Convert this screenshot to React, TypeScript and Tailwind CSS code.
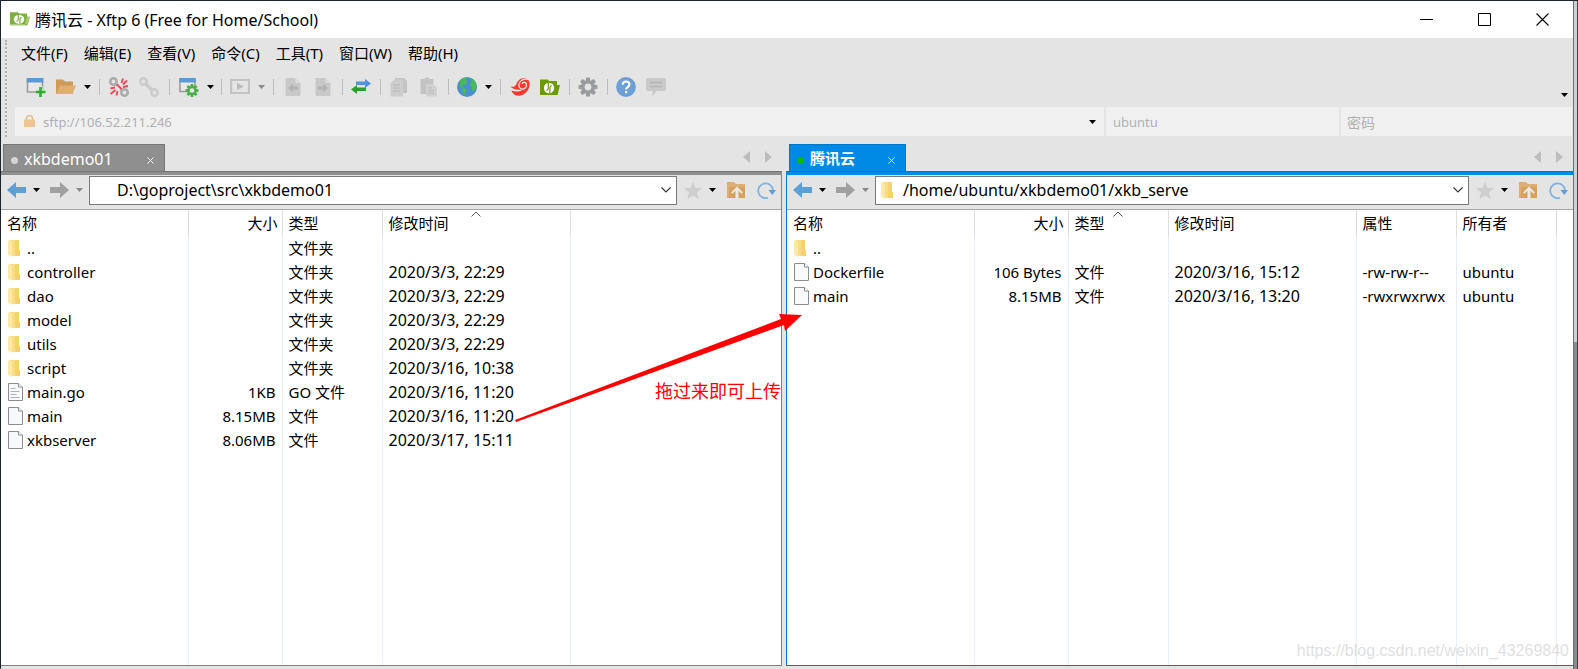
import type { ReactNode } from "react";

const Caret = ({ dim = false }: { dim?: boolean }) => (
  <svg viewBox="0 0 7 4" className={`h-1 w-[7px] ${dim ? "fill-[#8a8a8a]" : "fill-black"}`} aria-hidden="true">
    <path d="M0 0h7L3.5 4z" />
  </svg>
);

function Tool({ label, children }: { label: string; children: ReactNode }) {
  return (
    <button type="button" aria-label={label} className="flex h-8 w-[30px] shrink-0 items-center justify-center">
      <svg viewBox="0 0 20 20" className="size-5" aria-hidden="true">
        {children}
      </svg>
    </button>
  );
}

function DropButton({ label, dim }: { label: string; dim?: boolean }) {
  return (
    <button type="button" aria-label={label} className="flex h-8 w-[13px] shrink-0 items-center justify-center">
      <Caret dim={dim} />
    </button>
  );
}

const Separator = ({ wide = false }: { wide?: boolean }) => (
  <span className={`flex shrink-0 justify-center ${wide ? "w-2.5" : "w-2"}`}>
    <span className="h-4 w-px bg-[#bdbdbd]" />
  </span>
);

const gearTeeth = [0, 45, 90, 135, 180, 225, 270, 315];

function Gear({ cx, cy, r, color, hole }: { cx: number; cy: number; r: number; color: string; hole: string }) {
  return (
    <g transform={`translate(${cx} ${cy}) scale(${r / 10})`}>
      {gearTeeth.map((a) => (
        <path key={a} d="M-1.800 -10h3.600l1 5h-5.600z" fill={color} transform={`rotate(${a})`} />
      ))}
      <circle r="7" fill={color} />
      <circle r="3.6" fill={hole} />
    </g>
  );
}

function XftpMark({ light = false }: { light?: boolean }) {
  const green = light ? "#7fae42" : "#6a9a06";
  return (
    <g>
      <path d="M0 2.500h8l1 1.500h8V8h3l-2.500 10H0z" fill={green} />
      {light && <path d="M17 8h3l-2.500 8.500H15V18H0v-1.500h15z" fill="#a9c878" />}
      <circle cx="9" cy="11" r="5.200" fill="#fff" />
      <path d="M8.300 6v5.200q0 1.300-1.800 2.300M9.900 16v-5.200q0-1.300 1.800-2.300" stroke={green} strokeWidth="1.200" fill="none" />
    </g>
  );
}

function Toolbar() {
  return (
    <div className="flex h-[39px] items-center pb-0.5 pl-3.5" role="toolbar" aria-label="工具栏">
      <Tool label="新建">
        <path d="M1.500 2.500h15v12.500h-15z" fill="#e9e9e9" stroke="#9b9b9b" strokeWidth="1.600" />
        <path d="M.7 1h16.600v4.500H.7z" fill="#5b9bd5" />
        <path d="M14.500 9v11M9 14.500h11" stroke="#e4e4e4" strokeWidth="4" />
        <path d="M14.500 10v10M9.500 15h10" stroke="#2eae2e" strokeWidth="2.600" />
      </Tool>
      <Tool label="打开">
        <path d="M0 2.500h7l2 2h8V17H0z" fill="#cf9a58" />
        <path d="M4 8.500h16L16.500 17H0z" fill="#deae72" />
      </Tool>
      <DropButton label="打开选项" />
      <Separator wide />
      <Tool label="断开">
        <g fill="none" stroke="#ababab" strokeWidth="2.600">
          <circle cx="4.500" cy="4.500" r="3.200" />
          <circle cx="15.500" cy="15.500" r="3.200" />
          <path d="M6.500 6.500l2 2M11.500 11.500l2 2" />
        </g>
        <path d="M12.500 6l1.500-4.500M14 7.500l4-4M14 10l5-1M6 10.500l-4.500 1M6.500 13l-5 4M8.500 14l-1 4.500M8 7.500l4.500 4.500" stroke="#ee4757" strokeWidth="1.800" />
      </Tool>
      <Tool label="重新连接">
        <g fill="none" stroke="#cbcbcb" strokeWidth="2.600">
          <circle cx="4.500" cy="4.500" r="3.200" />
          <circle cx="15.500" cy="15.500" r="3.200" />
          <path d="M6.500 6.500l7 7" strokeWidth="3.200" />
        </g>
      </Tool>
      <Separator wide />
      <Tool label="属性">
        <path d="M1 2.500h15v12H1z" fill="#e9e9e9" stroke="#9b9b9b" strokeWidth="1.600" />
        <path d="M.2 1h16.600v4.500H.2z" fill="#5b9bd5" />
        <Gear cx={13} cy={13.5} r={6.5} color="#49b04c" hole="#e9e9e9" />
      </Tool>
      <DropButton label="属性选项" />
      <Separator />
      <Tool label="播放">
        <path d="M1 3h18v13H1z" fill="none" stroke="#c3c3c3" strokeWidth="2.200" />
        <path d="M7 6l7 3.500L7 13z" fill="#bcbcbc" />
      </Tool>
      <DropButton label="播放选项" dim />
      <Separator wide />
      <Tool label="向左传输">
        <path d="M2.500 1h10l5 5v13h-15z" fill="#c8c8c8" />
        <path d="M12.500 1v5h5z" fill="#dcdcdc" />
        <path d="M5 11l5-4.500V9.500h5v3h-5v3z" fill="#b3b3b3" />
      </Tool>
      <Tool label="向右传输">
        <path d="M2.500 1h10l5 5v13h-15z" fill="#c8c8c8" />
        <path d="M12.500 1v5h5z" fill="#dcdcdc" />
        <path d="M15 11l-5-4.500V9.500H5v3h5v3z" fill="#b3b3b3" />
      </Tool>
      <Separator />
      <Tool label="同步">
        <path d="M5 4.500h9V2l6 4.500-6 4.500V8H5z" fill="#4f93d8" />
        <path d="M15 10.500H6V8l-6 4.500L6 17v-3h9z" fill="#2aa02a" />
      </Tool>
      <Separator />
      <Tool label="复制">
        <path d="M6 1h9l3 3v12H6z" fill="#c3c3c3" />
        <path d="M1.500 6l4-3.500h8.500V19.500H1.500z" fill="#cdcdcd" />
        <path d="M4 8h7M4 11h7M4 14h7" stroke="#b8b8b8" strokeWidth="1.200" />
      </Tool>
      <Tool label="粘贴">
        <path d="M1.500 2H6V.5h4V2h4.500v15h-13z" fill="#c3c3c3" />
        <path d="M7 7h7l4 3.500v9H7z" fill="#d0d0d0" />
        <path d="M9 11h4M9 13.500h6M9 16h6" stroke="#b8b8b8" strokeWidth="1.200" />
      </Tool>
      <Separator />
      <Tool label="浏览器">
        <circle cx="10" cy="10" r="10" fill="#4a8fd0" />
        <path d="M3 3.500C6 1 9 0 10.500.8L9 3l1.500 2-2.500 3-3 1 2 2 2.500 1.500-1 3-1 3C6 17 5.500 14 5.500 12.500L3 9zM12 2l3-.8c3 1.800 4.500 4.800 4.700 8l-2.200 5-2.500-.5-.5-4-2-2 1-2.500 2-1z" fill="#49b95d" />
      </Tool>
      <DropButton label="语言" />
      <Separator wide />
      <Tool label="Xshell">
        <path d="M0 9c2 1.500 4 1 6-1 1.500-5 6-8 10.500-6.500C20 3 20.500 8 18.500 12c-3 6-9 8-13.500 6C3 17 2 15 1.500 13.500c4 2 9 1 12-1C8 13 3 13 0 9z" fill="#f23a2f" />
        <path d="M18 2.500c-5-2-11 3-8.500 8 2 3 7 1.500 7-2.500 0-3-4-3.500-4.500-.8" fill="none" stroke="#e4e4e4" strokeWidth="1.300" />
        <circle cx="13" cy="8.500" r="1.500" fill="#f23a2f" />
      </Tool>
      <Tool label="Xftp">
        <XftpMark />
      </Tool>
      <Separator />
      <Tool label="选项">
        <Gear cx={10} cy={10} r={9.5} color="#999b9e" hole="#e4e4e4" />
      </Tool>
      <Separator />
      <Tool label="帮助">
        <circle cx="10" cy="10" r="9.900" fill="#6c9fd6" />
        <path d="M6.700 7.700C6.700 5.500 8 4.500 10 4.500s3.500 1.100 3.500 3c0 2.500-3.400 2.600-3.400 5" fill="none" stroke="#fff" strokeWidth="2.100" />
        <path d="M9 14h2.200v2.200H9z" fill="#fff" />
      </Tool>
      <Tool label="反馈">
        <path d="M2 1h16a2 2 0 0 1 2 2v9a2 2 0 0 1-2 2h-7.500L6.500 19v-5H2a2 2 0 0 1-2-2V3a2 2 0 0 1 2-2z" fill="#c9c9c9" />
        <path d="M4 5.500h12M4 9.500h12" stroke="#b6b6b6" strokeWidth="1.400" />
      </Tool>
      <button type="button" aria-label="更多工具" className="mr-[5px] ml-auto self-end pb-2">
        <Caret />
      </button>
    </div>
  );
}

const FolderIcon = () => (
  <svg viewBox="0 0 13 17" className="h-[17px] w-[13px] shrink-0" aria-hidden="true">
    <path d="M2 0h9v10h1v6H3z" fill="#f9dc84" />
    <path d="M7 0h4v10h1v6H7z" fill="#f4d270" />
    <path d="M0 0l4 2v15l-4-2z" fill="#ffe9a8" />
  </svg>
);

const FileIcon = ({ text = false }: { text?: boolean }) => (
  <svg viewBox="0 0 15 18" className="h-[18px] w-[15px] shrink-0" aria-hidden="true">
    <path d="M.5.5h10L14.500 4v13.500H.5z" fill="#f8f9fa" stroke="#8c8c8c" />
    <path d="M10.500.5V4h4" fill="#fff" stroke="#8c8c8c" />
    {text && <path d="M2.500 5.500h5M2.500 8.500h9M2.500 11.500h6M2.500 14.500h9" stroke="#b0b4b8" />}
  </svg>
);

const Arrow = ({ forward = false }: { forward?: boolean }) => (
  <svg viewBox="0 0 19 16" className={`h-4 w-[19px] ${forward ? "fill-[#a0a0a0]" : "fill-[#5b9fd6]"}`} aria-hidden="true">
    <path d={forward ? "M19 8l-9 8v-5H0V5h10V0z" : "M0 8l9-8v5h10v6H9v5z"} />
  </svg>
);

type Row = { kind: "folder" | "file" | "text"; cells: string[] };

type PaneData = {
  tab: string;
  path: string;
  active: boolean;
  headers: string[];
  sorted: number;
  rows: Row[];
};

const localPane: PaneData = {
  tab: "xkbdemo01",
  path: "D:\\goproject\\src\\xkbdemo01",
  active: false,
  headers: ["名称", "大小", "类型", "修改时间"],
  sorted: 3,
  rows: [
    { kind: "folder", cells: ["..", "", "文件夹", ""] },
    { kind: "folder", cells: ["controller", "", "文件夹", "2020/3/3, 22:29"] },
    { kind: "folder", cells: ["dao", "", "文件夹", "2020/3/3, 22:29"] },
    { kind: "folder", cells: ["model", "", "文件夹", "2020/3/3, 22:29"] },
    { kind: "folder", cells: ["utils", "", "文件夹", "2020/3/3, 22:29"] },
    { kind: "folder", cells: ["script", "", "文件夹", "2020/3/16, 10:38"] },
    { kind: "text", cells: ["main.go", "1KB", "GO 文件", "2020/3/16, 11:20"] },
    { kind: "file", cells: ["main", "8.15MB", "文件", "2020/3/16, 11:20"] },
    { kind: "file", cells: ["xkbserver", "8.06MB", "文件", "2020/3/17, 15:11"] },
  ],
};

const remotePane: PaneData = {
  tab: "腾讯云",
  path: "/home/ubuntu/xkbdemo01/xkb_serve",
  active: true,
  headers: ["名称", "大小", "类型", "修改时间", "属性", "所有者"],
  sorted: 2,
  rows: [
    { kind: "folder", cells: ["..", "", "", "", "", ""] },
    { kind: "file", cells: ["Dockerfile", "106 Bytes", "文件", "2020/3/16, 15:12", "-rw-rw-r--", "ubuntu"] },
    { kind: "file", cells: ["main", "8.15MB", "文件", "2020/3/16, 13:20", "-rwxrwxrwx", "ubuntu"] },
  ],
};

const colWidths = ["w-[187px]", "w-[94px]", "w-[100px]", "w-[188px]", "w-[100px]", "w-[100px]"];

function FileTable({ pane }: { pane: PaneData }) {
  return (
    <table className="h-full w-full grow table-fixed border-collapse bg-white text-left text-[15px] leading-5">
      <colgroup>
        {pane.headers.map((h, i) => (
          <col key={h} className={colWidths[i]} />
        ))}
        <col />
      </colgroup>
      <thead>
        <tr className="h-[26px]">
          {pane.headers.map((h, i) => (
            <th
              key={h}
              scope="col"
              className={`relative border-r border-[#dedede] p-0 font-normal ${i === 1 ? "pr-1 text-right" : "pl-1.5"}`}
            >
              {h}
              {i === pane.sorted && (
                <svg viewBox="0 0 10 6" className="absolute top-px left-1/2 h-1.5 w-2.5 -translate-x-1/2" aria-hidden="true">
                  <path d="M.5 5.500L5 1l4.500 4.500" fill="none" stroke="#555" />
                </svg>
              )}
            </th>
          ))}
          <td />
        </tr>
      </thead>
      <tbody>
        {pane.rows.map((row) => (
          <tr key={row.cells[0]} className="h-6">
            {row.cells.map((cell, i) => (
              <td
                key={i}
                className={`border-r border-[#e6effb] p-0 whitespace-nowrap ${i === 1 ? "pr-1.5 text-right" : i === 0 ? "pl-[7px]" : "pl-1.5"} ${i === 3 ? "text-base leading-5" : ""}`}
              >
                {i === 0 ? (
                  <span className="flex items-center">
                    <span className="flex w-[19px] shrink-0">
                      {row.kind === "folder" ? <FolderIcon /> : <FileIcon text={row.kind === "text"} />}
                    </span>
                    {cell}
                  </span>
                ) : (
                  cell
                )}
              </td>
            ))}
            <td />
          </tr>
        ))}
        <tr>
          {pane.headers.map((h) => (
            <td key={h} className="border-r border-[#e6effb] p-0" />
          ))}
          <td />
        </tr>
      </tbody>
    </table>
  );
}

function Pane({ pane }: { pane: PaneData }) {
  const { active } = pane;
  return (
    <section className="flex min-w-0 flex-col">
      <div className={`flex h-[34px] items-end justify-between pr-2.5 ${active ? "pl-[3px]" : "pl-0.5"}`}>
        <div
          className={`flex h-[27px] items-center border border-b-0 pl-[7px] text-white ${active ? "w-[117px] border-[#0078c8] bg-[#008ae6]" : "w-[162px] border-[#757575] bg-[#8f8f8f]"}`}
        >
          <span className={`mt-1 size-[7px] rounded-full ${active ? "bg-[#0db80d]" : "bg-[#d4d4d4]"}`} />
          <span className={`mt-px ml-[6px] ${active ? "text-[15px] font-bold" : "text-base"}`}>{pane.tab}</span>
          <button type="button" aria-label="关闭标签" className="mt-1 mr-2.5 ml-auto">
            <svg viewBox="0 0 7 7" className="size-[7px]" aria-hidden="true">
              <path d="M.5.5l6 6M6.500.5l-6 6" stroke="#fff" />
            </svg>
          </button>
        </div>
        <div className="flex gap-[15px] self-center pt-1.5">
          <button type="button" aria-label="上一个标签">
            <svg viewBox="0 0 7 12" className="h-3 w-[7px] fill-[#bdbdbd]" aria-hidden="true">
              <path d="M7 0v12L0 6z" />
            </svg>
          </button>
          <button type="button" aria-label="下一个标签">
            <svg viewBox="0 0 7 12" className="h-3 w-[7px] fill-[#bdbdbd]" aria-hidden="true">
              <path d="M0 0v12l7-6z" />
            </svg>
          </button>
        </div>
      </div>
      <div className={`h-1 border-t ${active ? "border-[#0078c8] bg-[#008ae6]" : "border-[#757575] bg-[#8f8f8f]"}`} />
      <div className={`flex grow flex-col border-b ${active ? "border-l border-[#0078c8]" : "border-r border-[#808080]"}`}>
        <div className="flex h-[35px] shrink-0 items-center border-b border-[#a8a8a8] pb-1 pl-1.5">
          <button type="button" aria-label="后退">
            <Arrow />
          </button>
          <button type="button" aria-label="后退历史" className="ml-[7px]">
            <Caret />
          </button>
          <button type="button" aria-label="前进" className="ml-2.5">
            <Arrow forward />
          </button>
          <button type="button" aria-label="前进历史" className="ml-[7px]">
            <Caret dim />
          </button>
          <div className="mr-[7px] ml-1.5 flex h-[29px] min-w-0 grow items-center border border-[#7a7a7a] bg-white pl-[5px]">
            <span className="flex w-[22px] shrink-0">{active && <FolderIcon />}</span>
            <input
              type="text"
              aria-label="路径"
              defaultValue={pane.path}
              className="min-w-0 grow bg-transparent text-base text-black outline-none"
            />
            <button type="button" aria-label="路径列表" className="mr-[5px]">
              <svg viewBox="0 0 10 6" className="h-1.5 w-2.5" aria-hidden="true">
                <path d="M.5.5L5 5 9.500.5" fill="none" stroke="#333" strokeWidth="1.100" />
              </svg>
            </button>
          </div>
          <button type="button" aria-label="收藏">
            <svg viewBox="0 0 18 17" className="h-[17px] w-[18px] fill-[#cecece]" aria-hidden="true">
              <path d="M9 0l2.400 5.800 6.600.5-5 4.200 1.600 6.500L9 13.500 3.400 17 5 10.500 0 6.300l6.600-.5z" />
            </svg>
          </button>
          <button type="button" aria-label="收藏列表" className="ml-[7px]">
            <Caret />
          </button>
          <button type="button" aria-label="上级目录" className="ml-[11px]">
            <svg viewBox="0 0 18 16" className="h-4 w-[18px]" aria-hidden="true">
              <path d="M0 0h7l2 2h9v14H0z" fill="#dcae74" />
              <path d="M2 5h16v11H2z" fill="#d5a060" />
              <path d="M4 10.500l6-6 6 6-1.500 1.300-3-3V16h-3V8.800l-3 3z" fill="#eee8e0" />
            </svg>
          </button>
          <button type="button" aria-label="刷新" className="mr-[5px] ml-3">
            <svg viewBox="0 0 19 17" className="h-[17px] w-[19px]" aria-hidden="true">
              <path d="M11 15.800A7.400 7.400 0 1 1 16 8" fill="none" stroke="#7fb2de" strokeWidth="1.800" />
              <path d="M11.500 8H19l-3.700 5z" fill="#5b9fd6" />
            </svg>
          </button>
        </div>
        <FileTable pane={pane} />
      </div>
    </section>
  );
}

const menus = ["文件(F)", "编辑(E)", "查看(V)", "命令(C)", "工具(T)", "窗口(W)", "帮助(H)"];

export default function App() {
  return (
    <div className="flex min-h-screen border-t border-l border-[#1d2430] bg-[#e4e4e4] font-['Noto_Sans','Noto_Sans_CJK_SC',sans-serif] text-black">
      <div className="flex min-w-0 grow flex-col">
        <header className="flex h-[37px] items-center bg-white pl-[9px]">
          <svg viewBox="0 0 20 20" preserveAspectRatio="none" className="mr-[5px] mb-0.5 h-[17px] w-5" aria-hidden="true">
            <XftpMark light />
          </svg>
          <h1 className="text-base">腾讯云 - Xftp 6 (Free for Home/School)</h1>
          <div className="ml-auto flex pr-0.5">
            <button type="button" aria-label="最小化" className="flex h-9 w-[58px] items-center justify-center">
              <svg viewBox="0 0 13 13" className="size-[13px]" aria-hidden="true">
                <path d="M0 6.500h13" stroke="#000" />
              </svg>
            </button>
            <button type="button" aria-label="最大化" className="flex h-9 w-[58px] items-center justify-center">
              <svg viewBox="0 0 13 13" className="size-[13px]" aria-hidden="true">
                <path d="M.5.5h12v12H.5z" fill="none" stroke="#000" />
              </svg>
            </button>
            <button type="button" aria-label="关闭" className="flex h-9 w-[58px] items-center justify-center">
              <svg viewBox="0 0 13 13" className="size-[13px]" aria-hidden="true">
                <path d="M.5.5l12 12M12.500.5l-12 12" stroke="#000" strokeWidth="1.100" />
              </svg>
            </button>
          </div>
        </header>

        <div className="flex">
          <span className="mt-0.5 ml-1 w-0 border-l-2 border-dotted border-[#b2b2b2]" />
          <div className="flex min-w-0 grow flex-col">
            <nav className="flex h-[30px] items-center gap-4 pl-3.5 text-[15px]">
              {menus.map((m) => (
                <button type="button" key={m}>
                  {m}
                </button>
              ))}
            </nav>
            <Toolbar />
            <form className="mb-px flex h-[29px] gap-0.5 pr-px pl-2 text-[13px]">
              <div className="flex min-w-0 grow items-center bg-[#f0f0f0] pt-0.5 pr-2 pl-[9px]">
                <svg viewBox="0 0 11 12" className="mr-2 mb-1 h-3 w-[11px] shrink-0" aria-hidden="true">
                  <path d="M2.500 5V3.500a3 3 0 0 1 6 0V5" fill="none" stroke="#e3bb87" strokeWidth="1.500" />
                  <path d="M0 4.500h11V12H0z" fill="#eec592" />
                </svg>
                <input
                  type="text"
                  aria-label="主机地址"
                  placeholder="sftp://106.52.211.246"
                  className="min-w-0 grow bg-transparent placeholder-[#b0b0b0] outline-none"
                />
                <button type="button" aria-label="地址列表" className="flex pb-0.5">
                  <Caret />
                </button>
              </div>
              <input
                type="text"
                aria-label="用户名"
                placeholder="ubuntu"
                className="w-[233px] bg-[#f0f0f0] px-[7px] pt-0.5 placeholder-[#b0b0b0] outline-none"
              />
              <input
                type="password"
                aria-label="密码"
                placeholder="密码"
                className="w-[231px] bg-[#f0f0f0] px-1.5 pt-0.5 text-sm placeholder-[#b0b0b0] outline-none"
              />
            </form>
          </div>
        </div>

        <main className="relative grid grow grid-cols-[781fr_787fr] gap-x-1 pb-[3px]">
          <Pane pane={localPane} />
          <Pane pane={remotePane} />
          <svg viewBox="0 0 290 112" className="pointer-events-none absolute top-[174px] left-[513px] h-28 w-[290px]" aria-hidden="true">
            <path d="M1 109L267 8l-2-5 23 1-17 16-1-6L2 111z" fill="#f00" />
          </svg>
          <p className="absolute top-[240px] left-[654px] text-lg text-[#f00]">拖过来即可上传</p>
          <p className="absolute right-1 bottom-1.5 font-['Liberation_Sans',sans-serif] text-base text-[#dfdfdf]">
            https://blog.csdn.net/weixin_43269840
          </p>
        </main>
      </div>
      <div className="flex w-[5px] shrink-0 flex-col border-r border-l border-l-[#6e6e6e] border-r-[#24485c]">
        <div className="h-[51%] bg-[#d0d0d0]" />
        <div className="grow bg-[#8a8a8a]" />
      </div>
    </div>
  );
}
